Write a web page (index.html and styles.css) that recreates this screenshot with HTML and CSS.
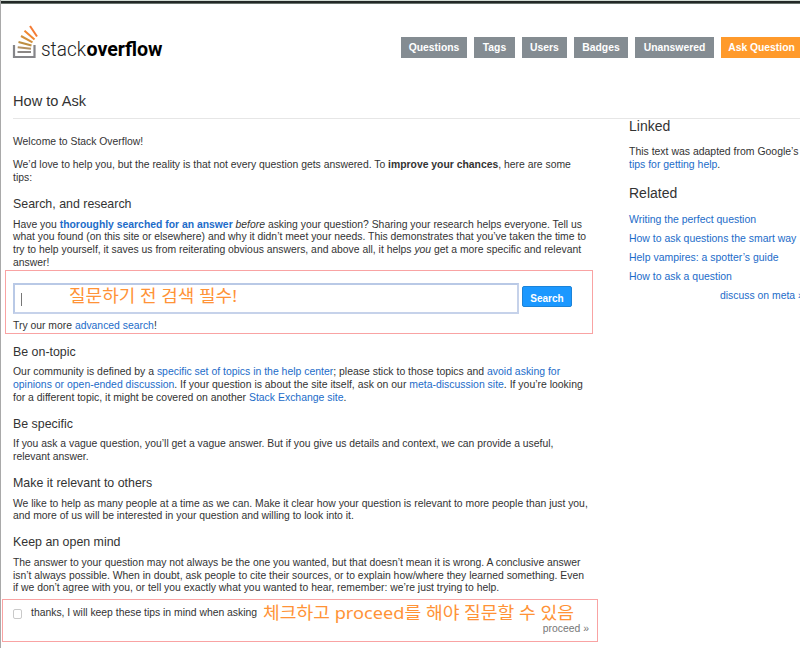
FILE: index.html
```html
<!DOCTYPE html>
<html lang="en">
<head>
<meta charset="utf-8">
<title>How to Ask - Stack Overflow</title>
<link rel="stylesheet" href="styles.css">
</head>
<body>
<div class="page">
<header class="header">
  <svg class="logo" width="160" height="40" viewBox="0 0 160 40">
    <path d="M2 20V32H22.500V20" fill="none" stroke="#858589" stroke-width="2.200"/>
    <path d="M5.500 27H19" stroke="#8b8785" stroke-width="2"/>
    <path d="M5.700 22.300L19 23.700" stroke="#b39163" stroke-width="2"/>
    <path d="M6.500 17L19.500 20.500" stroke="#bd8e42" stroke-width="2"/>
    <path d="M9 11L20.500 17.300" stroke="#d28f3b" stroke-width="2"/>
    <path d="M12.500 5.700L22.500 14.500" stroke="#f0862f" stroke-width="2"/>
    <path d="M18 1L25 11.500" stroke="#f47b35" stroke-width="2"/>
    <text class="logo-light" x="29" y="30.500" textLength="45" lengthAdjust="spacingAndGlyphs">stack</text>
    <text class="logo-bold" x="74.500" y="30.500" textLength="76" lengthAdjust="spacingAndGlyphs">overflow</text>
  </svg>
  <nav class="nav">
    <a class="w1">Questions</a><a class="w2">Tags</a><a class="w3">Users</a><a class="w4">Badges</a><a class="w5">Unanswered</a><a class="w6 ask">Ask Question</a>
  </nav>
</header>
<h1>How to Ask</h1>
<div class="columns">
<main class="main">
  <p>Welcome to Stack Overflow!</p>
  <p class="intro">We’d love to help you, but the reality is that not every question gets answered. To <b>improve your chances</b>, here are some<br>tips:</p>
  <h2>Search, and research</h2>
  <p>Have you <a><b>thoroughly searched for an answer</b></a> <i>before</i> asking your question? Sharing your research helps everyone. Tell us<br>what you found (on this site or elsewhere) and why it didn’t meet your needs. This demonstrates that you’ve taken the time to<br>try to help yourself, it saves us from reiterating obvious answers, and above all, it helps <i>you</i> get a more specific and relevant<br>answer!</p>
  <div class="search"><div class="field"><span class="caret"></span></div><div class="button">Search</div></div>
  <p>Try our more <a>advanced search</a>!</p>
  <h2>Be on-topic</h2>
  <p class="topic">Our community is defined by a <a>specific set of topics in the help center</a>; please stick to those topics and <a>avoid asking for<br>opinions or open-ended discussion</a>. If your question is about the site itself, ask on our <a>meta-discussion site</a>. If you’re looking<br>for a different topic, it might be covered on another <a>Stack Exchange site</a>.</p>
  <h2>Be specific</h2>
  <p>If you ask a vague question, you’ll get a vague answer. But if you give us details and context, we can provide a useful,<br>relevant answer.</p>
  <h2>Make it relevant to others</h2>
  <p>We like to help as many people at a time as we can. Make it clear how your question is relevant to more people than just you,<br>and more of us will be interested in your question and willing to look into it.</p>
  <h2>Keep an open mind</h2>
  <p>The answer to your question may not always be the one you wanted, but that doesn’t mean it is wrong. A conclusive answer<br>isn’t always possible. When in doubt, ask people to cite their sources, or to explain how/where they learned something. Even<br>if we don’t agree with you, or tell you exactly what you wanted to hear, remember: we’re just trying to help.</p>
  <div class="agree"><span class="check"></span><p>thanks, I will keep these tips in mind when asking</p></div>
  <p class="proceed">proceed »</p>
</main>
<aside class="side">
  <h3>Linked</h3>
  <p>This text was adapted from Google’s<br><a>tips for getting help</a>.</p>
  <h3 class="related">Related</h3>
  <ul>
    <li><a>Writing the perfect question</a></li>
    <li><a>How to ask questions the smart way</a></li>
    <li><a>Help vampires: a spotter’s guide</a></li>
    <li><a>How to ask a question</a></li>
  </ul>
  <p class="meta"><a>discuss on meta »</a></p>
</aside>
</div>
<div class="mark mark-search"></div>
<div class="mark mark-proceed"></div>
<svg class="notes" width="800" height="648" viewBox="0 0 800 648" lang="ko">
  <text x="69" y="302" textLength="168" lengthAdjust="spacingAndGlyphs">질문하기 전 검색 필수!</text>
  <text x="263" y="619" textLength="311" lengthAdjust="spacingAndGlyphs">체크하고 proceed를 해야 질문할 수 있음</text>
</svg>
</div>
</body>
</html>
```
FILE: styles.css
```css
* { box-sizing: border-box; }
body { margin: 0; background: #fff; }
.page {
  position: relative; width: 800px; height: 648px; overflow: hidden;
  border-left: 1px solid #a9a9a9; padding-left: 12px;
  font: 10.39px/12.67px "Liberation Sans", Arial, sans-serif; color: #333; white-space: nowrap;
  background: linear-gradient(#d3ddd6 0 1px, #232927 1px 3px, #69736d 3px 4px, #fff 4px);
}
p, h1, h2, h3, ul { margin: 0; padding: 0; font-weight: normal; }
a { color: #1c6cc9; }
.header { display: flex; justify-content: space-between; height: 90px; padding-top: 25px; }
.logo { flex: none; margin-left: -1px; }
.logo-light { font: 300 21px Roboto, sans-serif; fill: #222; }
.logo-bold { font: 700 20.5px Roboto, sans-serif; fill: #000; }
.nav { display: flex; gap: 7px; padding-top: 12px; }
.nav a {
  height: 21px; line-height: 21px; background: #848c92; color: #fff;
  font-weight: bold; font-size: 10.35px; text-align: center;
}
.w1 { width: 66px; } .w2 { width: 41px; } .w3 { width: 45px; }
.w4 { width: 54px; } .w5 { width: 79px; } .w6 { width: 79px; }
.nav .ask { background: #ff9a2b; padding-left: 2px; }
h1 { height: 29px; font-size: 14.6px; line-height: 22px; border-bottom: 1px solid #e6e6e6; }
.columns { display: flex; }
.main { flex: none; width: 616px; padding-top: 16.7px; }
.intro { margin-top: 10.9px; }
h2 { font-size: 12.4px; line-height: 16px; margin: 11.2px 0 6.8px; }
.search { display: flex; gap: 3px; margin: 14px 0 5.5px; }
.field { width: 506px; height: 31px; border: 2px solid #c6d2ea; border-color: #b9c9e6 #c6d2ea #c6d2ea #b9c9e6; padding: 8px 6px; }
.caret { display: block; width: 1px; height: 13px; background: #777; }
.button {
  width: 50px; height: 21px; margin-top: 3px; border: 1px solid #1c83d8; border-radius: 2px;
  background: #1b98ff; color: #fff; font-size: 10px; font-weight: bold; line-height: 24px; text-align: center;
}
.topic { font-size: 10.45px; }
.agree { display: flex; gap: 9px; margin-top: 12.4px; }
.check { width: 9px; height: 10px; margin-top: 2px; border: 1px solid #c9c9c9; border-radius: 2px; }
.proceed { margin: 2.5px 40px 0 0; text-align: right; color: #777; }
.side { font-size: 10.46px; }
h3 { font-size: 14px; line-height: 16px; margin: -1.5px 0 12.8px; }
.side h3.related { margin: 13.7px 0 8.8px; }
.side ul { list-style: none; }
.side li { line-height: 19px; }
.side .meta { line-height: 19px; padding-left: 91px; font-size: 10.4px; }
.mark { position: absolute; border: 1px solid #f9a3a3; }
.mark-search { left: 4px; top: 270px; width: 588px; height: 64px; }
.mark-proceed { left: 1px; top: 599px; width: 596px; height: 43px; }
.notes { position: absolute; left: -1px; top: 0; }
.notes text { font: 400 17px "Noto Sans", "Noto Sans CJK KR", sans-serif; fill: #ff9337; }
```
